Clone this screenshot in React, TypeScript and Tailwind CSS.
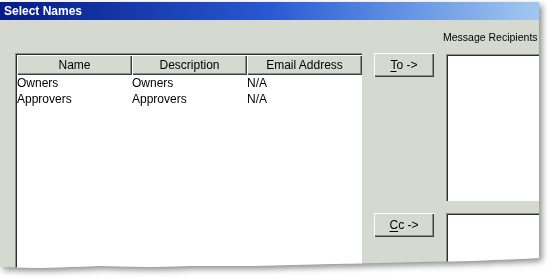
import React from 'react';

const raised =
	'bg-[#d5d9d0] shadow-[inset_1px_1px_0_#ffffff,inset_-1px_-1px_0_#3c3f3c,inset_-2px_-2px_0_#8d918b]';
const sunken =
	'bg-white shadow-[inset_1px_1px_0_#8d918b,inset_2px_2px_0_#2e302e]';

const rows = [
	{ name: 'Owners', description: 'Owners', email: 'N/A' },
	{ name: 'Approvers', description: 'Approvers', email: 'N/A' },
];

const HeaderCell = ({ label }: { label: string }) => (
	<div className={`w-[115px] h-[20px] flex items-center justify-center ${raised}`}>
		{label}
	</div>
);

const Button = ({ hot, rest }: { hot: string; rest: string }) => (
	<button className={`w-[60px] h-[24px] flex items-center justify-center ${raised}`}>
		<span>
			<span className="underline underline-offset-2">{hot}</span>
			{rest}
		</span>
	</button>
);

const App = () => {
	return (
		<div className="w-[554px] h-[279px] bg-white pt-[2px] font-['Liberation_Sans',Arial,sans-serif] text-[12px] text-black overflow-hidden">
			<div className="drop-shadow-[3px_3px_3px_rgba(0,0,0,0.45)]">
				<div className="w-[539px] h-[266px] bg-[#d5d9d0] overflow-hidden [clip-path:polygon(0_0,100%_0,100%_256px,520px_257px,470px_259px,420px_260px,380px_261px,330px_262px,290px_263px,250px_264px,190px_264px,150px_265px,100px_264px,40px_266px,0_265px)]">
					<div className="h-[18px] pl-[4px] flex items-center bg-gradient-to-r from-[#081a86] via-[#2a58d2] to-[#a3c8ef] text-white font-bold">
						Select Names
					</div>
					<div className="flex items-start pl-[15px]">
						<div className="mt-[33px] w-[347px] h-[230px] pt-[2px] pl-[2px] bg-white shadow-[inset_1px_1px_0_#8d918b,inset_2px_2px_0_#2e302e]">
							<div className="flex">
								<HeaderCell label="Name" />
								<HeaderCell label="Description" />
								<HeaderCell label="Email Address" />
							</div>
							{rows.map((row) => (
								<div key={row.name} className="flex h-[16px] items-center leading-none">
									<div className="w-[115px]">{row.name}</div>
									<div className="w-[115px]">{row.description}</div>
									<div className="w-[115px]">{row.email}</div>
								</div>
							))}
						</div>
						<div className="ml-[12px] mt-[33px] flex flex-col">
							<Button hot="T" rest="o ->" />
							<div className="mt-[136px]">
								<Button hot="C" rest="c ->" />
							</div>
						</div>
						<div className="ml-[12px] flex flex-col">
							<div className="h-[34px] pt-[10px] whitespace-nowrap leading-[14px] -ml-[3px] text-[10.5px]">
								Message Recipients
							</div>
							<div className={`w-[95px] h-[147px] ${sunken}`} />
							<div className={`mt-[12px] w-[95px] h-[60px] ${sunken}`} />
						</div>
					</div>
				</div>
			</div>
		</div>
	);
};

export default App;
